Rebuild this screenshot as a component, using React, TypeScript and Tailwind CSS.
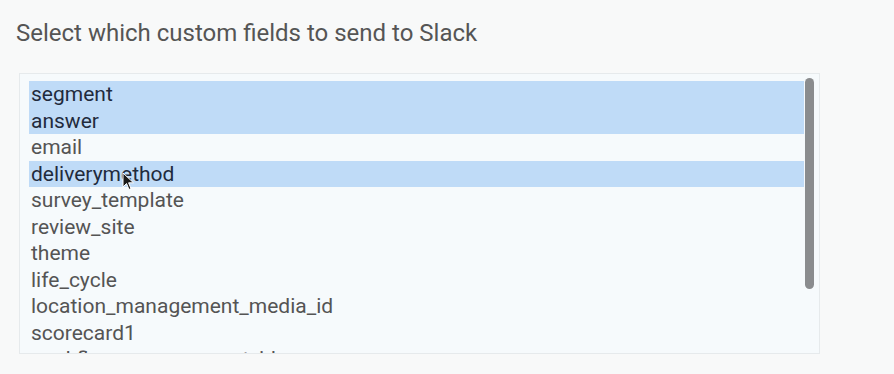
import React from "react";

const items: { label: string; selected: boolean }[] = [
  { label: "segment", selected: true },
  { label: "answer", selected: true },
  { label: "email", selected: false },
  { label: "deliverymethod", selected: true },
  { label: "survey_template", selected: false },
  { label: "review_site", selected: false },
  { label: "theme", selected: false },
  { label: "life_cycle", selected: false },
  { label: "location_management_media_id", selected: false },
  { label: "scorecard1", selected: false },
  { label: "workflow_management_id", selected: false },
];

function Cursor() {
  return (
    <svg
      className="absolute left-[122px] top-[172px] pointer-events-none"
      width="14"
      height="20"
      viewBox="0 0 14 20"
    >
      <path
        d="M1 1 L1 15 L4.5 11.5 L7 17.5 L9 16.6 L6.6 10.8 L11.5 10.8 Z"
        fill="#1a1a1a"
        stroke="#ffffff"
        strokeWidth="1"
        strokeLinejoin="round"
      />
    </svg>
  );
}

export default function App() {
  return (
    <div
      className="relative w-[894px] h-[374px] bg-[#f8f9f9] overflow-hidden"
      style={{ fontFamily: "Roboto, 'Liberation Sans', sans-serif" }}
    >
      <div className="pl-[16px] pt-[18px]">
        <div className="text-[24px] leading-[30px] text-[#555555]">
          Select which custom fields to send to Slack
        </div>
        <div className="mt-[25px] ml-[3px] w-[801px] h-[281px] border border-[#e6eaec] bg-[#f6fafc] flex overflow-hidden">
          <div className="flex-1 pt-[7px] pl-[9px]">
            {items.map((it) => (
              <div
                key={it.label}
                className={
                  it.selected
                    ? "h-[26.5px] leading-[26.5px] pl-[2px] text-[21px] bg-[#bfdbf7] text-[#1f2b3d]"
                    : "h-[26.5px] leading-[26.5px] pl-[2px] text-[21px] text-[#545454]"
                }
              >
                {it.label}
              </div>
            ))}
          </div>
          <div className="w-[15px] pt-[4px] pl-[1px]">
            <div className="w-[9px] h-[211px] rounded-full bg-[#8a8c8e]" />
          </div>
        </div>
      </div>
      <Cursor />
    </div>
  );
}
